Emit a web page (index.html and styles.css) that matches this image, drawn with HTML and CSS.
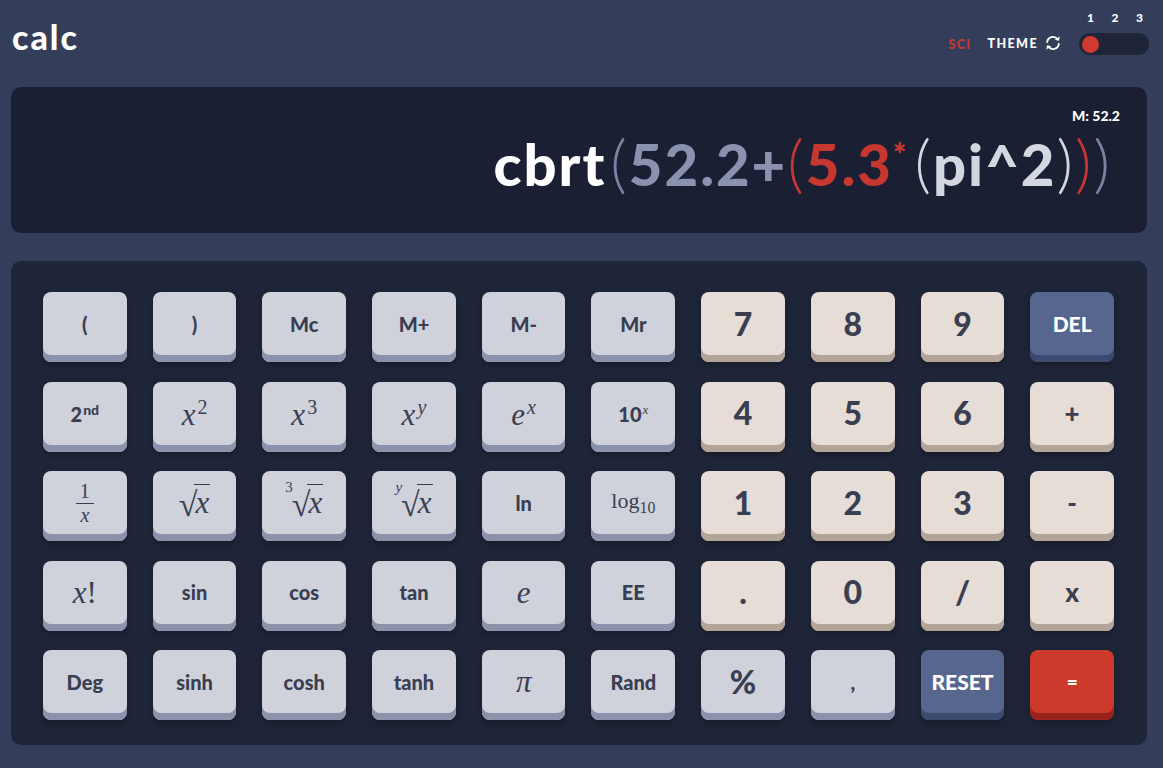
FILE: index.html
```html
<!DOCTYPE html>
<html lang="en">
<head>
<meta charset="utf-8">
<title>calc</title>
<link rel="stylesheet" href="styles.css">
</head>
<body>
<div class="app">
  <header class="top">
    <div class="logo">calc</div>
    <div class="controls">
      <span class="sci">SCI</span>
      <span class="theme">THEME
        <svg class="refresh" viewBox="0 0 20 20" width="18" height="18" aria-hidden="true">
          <path d="M3.5 9 A6.5 6.5 0 0 1 15.2 6" fill="none" stroke="#fff" stroke-width="2" stroke-linecap="round"/>
          <path d="M16.5 11 A6.5 6.5 0 0 1 4.8 14" fill="none" stroke="#fff" stroke-width="2" stroke-linecap="round"/>
          <path d="M17.5 2.8 L16.6 7.6 L12 6.4 Z" fill="#fff"/>
          <path d="M2.5 17.2 L3.4 12.4 L8 13.6 Z" fill="#fff"/>
        </svg>
      </span>
      <div class="switch">
        <div class="nums"><span>1</span><span>2</span><span>3</span></div>
        <div class="track"><span class="knob"></span></div>
      </div>
    </div>
  </header>

  <section class="display">
    <div class="mem">M: 52.2</div>
    <div class="expr"><span class="fn">cbrt</span><span class="p p-gray">(</span><span class="c-gray">52.2+</span><span class="p p-red">(</span><span class="c-red">5.3</span><span class="star">*</span><span class="p p-light">(</span><span class="c-light">pi^2</span><span class="p p-light">)</span><span class="p p-red">)</span><span class="p p-gray">)</span></div>
  </section>

  <section class="keypad">
    <button class="key"><span>(</span></button>
    <button class="key"><span>)</span></button>
    <button class="key"><span>Mc</span></button>
    <button class="key"><span>M+</span></button>
    <button class="key"><span>M-</span></button>
    <button class="key"><span>Mr</span></button>
    <button class="key num"><span>7</span></button>
    <button class="key num"><span>8</span></button>
    <button class="key num"><span>9</span></button>
    <button class="key blue"><span>DEL</span></button>

    <button class="key"><span>2<sup class="sup-nd">nd</sup></span></button>
    <button class="key math"><span><i>x</i><sup>2</sup></span></button>
    <button class="key math"><span><i>x</i><sup>3</sup></span></button>
    <button class="key math"><span><i>x</i><sup><i>y</i></sup></span></button>
    <button class="key math"><span><i>e</i><sup><i>x</i></sup></span></button>
    <button class="key"><span>10<sup class="sup-x"><i>x</i></sup></span></button>
    <button class="key num"><span>4</span></button>
    <button class="key num"><span>5</span></button>
    <button class="key num"><span>6</span></button>
    <button class="key num op"><span>+</span></button>

    <button class="key math"><span class="frac"><span class="fr-top">1</span><span class="fr-bot"><i>x</i></span></span></button>
    <button class="key math"><span class="root"><span class="rad">√</span><span class="under"><i>x</i></span></span></button>
    <button class="key math"><span class="root"><span class="idx">3</span><span class="rad">√</span><span class="under"><i>x</i></span></span></button>
    <button class="key math"><span class="root"><span class="idx"><i>y</i></span><span class="rad">√</span><span class="under"><i>x</i></span></span></button>
    <button class="key"><span>ln</span></button>
    <button class="key math log"><span>log<sub>10</sub></span></button>
    <button class="key num"><span>1</span></button>
    <button class="key num"><span>2</span></button>
    <button class="key num"><span>3</span></button>
    <button class="key num op"><span>-</span></button>

    <button class="key math"><span><i>x</i>!</span></button>
    <button class="key"><span>sin</span></button>
    <button class="key"><span>cos</span></button>
    <button class="key"><span>tan</span></button>
    <button class="key math"><span><i>e</i></span></button>
    <button class="key"><span>EE</span></button>
    <button class="key num"><span>.</span></button>
    <button class="key num"><span>0</span></button>
    <button class="key num"><span>/</span></button>
    <button class="key num op"><span>x</span></button>

    <button class="key"><span>Deg</span></button>
    <button class="key"><span>sinh</span></button>
    <button class="key"><span>cosh</span></button>
    <button class="key"><span>tanh</span></button>
    <button class="key math"><span><i>π</i></span></button>
    <button class="key"><span>Rand</span></button>
    <button class="key big"><span>%</span></button>
    <button class="key"><span>,</span></button>
    <button class="key blue"><span>RESET</span></button>
    <button class="key red"><span>=</span></button>
  </section>
</div>
</body>
</html>
```

FILE: styles.css
```css
html, body {
  margin: 0;
  padding: 0;
}
body {
  background: #343e5a;
  font-family: "Lato", "Noto Sans", sans-serif;
  color: #fff;
}
.app {
  width: 1136px;
  padding-left: 11px;
}
.top {
  height: 87px;
  display: flex;
  align-items: flex-start;
  justify-content: space-between;
}
.logo {
  font-size: 34px;
  font-weight: 900;
  margin-top: 16px;
  margin-left: 1px;
  letter-spacing: 2px;
}
.controls {
  display: flex;
  align-items: flex-start;
  margin-top: 10px;
  margin-right: -2px;
}
.sci, .theme {
  font-size: 12.5px;
  font-weight: 900;
  letter-spacing: 1.4px;
  margin-top: 27px;
}
.sci {
  color: #c63c35;
  margin-right: 16px;
}
.theme {
  color: #fff;
  display: flex;
  align-items: center;
  gap: 6px;
  margin-top: 24px;
  margin-right: 17px;
}
.refresh {
  display: block;
}
.switch {
  display: flex;
  flex-direction: column;
  width: 70px;
}
.nums {
  display: flex;
  justify-content: space-between;
  padding: 0 6px 0 8px;
  font-size: 12px;
  font-weight: 900;
  height: 16px;
  margin-bottom: 7px;
}
.track {
  height: 22px;
  border-radius: 11px;
  background: #1f2539;
  display: flex;
  align-items: center;
  padding-left: 3px;
}
.knob {
  width: 17px;
  height: 17px;
  border-radius: 50%;
  background: #d03a2f;
}

.display {
  height: 146px;
  box-sizing: border-box;
  background: #1a1f33;
  border-radius: 10px;
  padding: 20px 35px 0 0;
  display: flex;
  flex-direction: column;
  align-items: flex-end;
}
.mem {
  font-size: 14px;
  font-weight: 900;
  margin-right: -8px;
  height: 18px;
}
.expr {
  font-size: 58px;
  font-weight: 900;
  line-height: 64px;
  margin-top: -3px;
  white-space: nowrap;
  letter-spacing: 2px;
}
.fn { color: #ffffff; margin-right: 4px; }
.c-gray { color: #8a92b0; }
.c-red { color: #c8372f; }
.c-light { color: #d3d7e1; }
.p {
  font-weight: 300;
  font-size: 64px;
}
.p-gray { color: #7a83a3; }
.p-red { color: #c8372f; }
.p-light { color: #d3d7e1; }
.star {
  color: #c8372f;
  font-size: 32px;
  vertical-align: 20px;
  margin-right: 6px;
}

.keypad {
  margin-top: 28px;
  height: 484px;
  box-sizing: border-box;
  background: #1f2539;
  border-radius: 10px;
  padding: 31px 33px 25px 32px;
  display: grid;
  grid-template-columns: repeat(10, 1fr);
  grid-template-rows: repeat(5, 70px);
  column-gap: 26px;
  row-gap: 19.5px;
}
.key {
  border: 0;
  margin: 0;
  height: 70px;
  box-sizing: border-box;
  padding: 0 0 7px 0;
  border-radius: 8px;
  background: #cfd2db;
  box-shadow: inset 0 -7px 0 #8c92ab, 0 3px 6px rgba(0, 0, 0, 0.28);
  color: #3a3e51;
  font-family: "Lato", "Noto Sans", sans-serif;
  font-size: 20px;
  font-weight: 900;
  display: flex;
  align-items: center;
  justify-content: center;
  line-height: 1;
}
.key.num {
  background: #e5ddd6;
  box-shadow: inset 0 -7px 0 #b2a496, 0 3px 6px rgba(0, 0, 0, 0.28);
  font-size: 32px;
}
.key.num.op {
  font-size: 26px;
}
.key.big {
  font-size: 32px;
}
.key.blue {
  background: #57668f;
  box-shadow: inset 0 -7px 0 #3d4a6f, 0 3px 6px rgba(0, 0, 0, 0.28);
  color: #fff;
  font-size: 21px;
}
.key.red {
  background: #cb3a2b;
  box-shadow: inset 0 -7px 0 #97231b, 0 3px 6px rgba(0, 0, 0, 0.28);
  color: #fff;
  font-size: 19px;
}
.key.math {
  font-family: "Liberation Serif", "DejaVu Serif", serif;
  font-weight: 400;
  font-size: 31px;
  color: #3a3e51;
}
.key.math sup {
  font-size: 20px;
  vertical-align: 11px;
  margin-left: 2px;
  line-height: 1;
}
.key .sup-nd {
  font-size: 14px;
  vertical-align: 7px;
  margin-left: 1px;
  line-height: 1;
}
.key .sup-x {
  font-family: "Liberation Serif", serif;
  font-weight: 400;
  font-size: 13px;
  vertical-align: 8px;
  margin-left: 1px;
  line-height: 1;
}
.key.log {
  font-size: 22px;
}
.key.log sub {
  font-size: 16px;
  vertical-align: -5px;
  line-height: 1;
}
.frac {
  display: inline-flex;
  flex-direction: column;
  align-items: center;
  font-size: 20px;
}
.fr-top {
  padding: 0 4px 2px;
  border-bottom: 1.2px solid #3a3e51;
}
.fr-bot {
  padding-top: 1px;
}
.root {
  display: inline-flex;
  align-items: flex-end;
}
.rad {
  font-size: 34px;
  line-height: 1;
}
.under {
  border-top: 1.6px solid #3a3e51;
  padding: 2px 1px 0 1px;
  line-height: 1;
  margin-left: -3px;
  margin-bottom: 4px;
}
.root .idx {
  font-size: 15px;
  line-height: 1;
  align-self: flex-start;
  margin-right: -1px;
  margin-top: -4px;
}
```
